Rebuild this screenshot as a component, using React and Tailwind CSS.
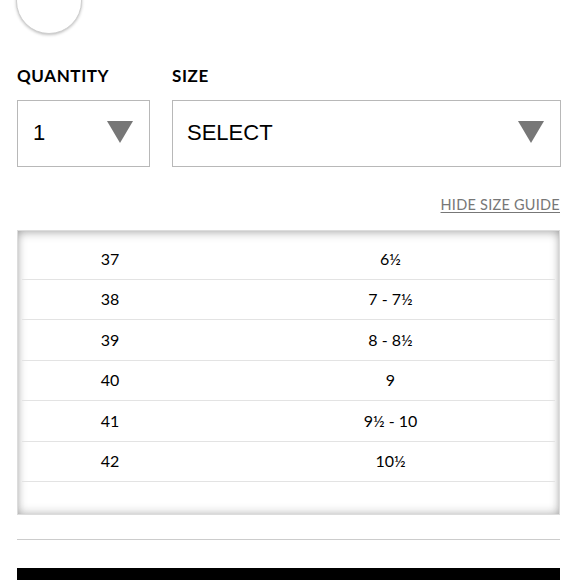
import React from 'react';

const sizes = [
  ['37', '6½'],
  ['38', '7 - 7½'],
  ['39', '8 - 8½'],
  ['40', '9'],
  ['41', '9½ - 10'],
  ['42', '10½'],
];

const Caret = () => (
  <svg width="26" height="22" viewBox="0 0 26 22">
    <polygon points="0,0 26,0 13,22" fill="#777777" />
  </svg>
);

export default function App() {
  return (
    <div className="relative w-[580px] h-[580px] overflow-hidden bg-white px-[17px]" style={{ fontFamily: 'Lato, "Noto Sans", sans-serif' }}>
      {/* swatch circle */}
      <div className="absolute left-[16px] top-[-32px] w-[66px] h-[66px] rounded-full bg-white border border-[#cfcfcf] shadow-[0_1px_3px_rgba(0,0,0,0.25)]" />

      <div className="pt-[66px] flex gap-[22px]">
        <div className="w-[133px]">
          <div className="text-[17px] font-bold text-black tracking-[0.6px] leading-[20px]">QUANTITY</div>
          <div className="mt-[14px] h-[67px] border-[1.5px] border-[#b8b8b8] flex items-center justify-between pl-[15px] pr-[16px] pb-[3px]">
            <span className="text-[22px] text-black" style={{ fontFamily: '"Liberation Sans", Arial, sans-serif' }}>1</span>
            <Caret />
          </div>
        </div>
        <div className="flex-1 pr-[2px]">
          <div className="text-[17px] font-bold text-black tracking-[0.6px] leading-[20px]">SIZE</div>
          <div className="mt-[14px] h-[67px] border-[1.5px] border-[#b8b8b8] flex items-center justify-between pl-[14px] pr-[16px] pb-[3px]">
            <span className="text-[22px] text-black" style={{ fontFamily: '"Liberation Sans", Arial, sans-serif' }}>SELECT</span>
            <Caret />
          </div>
        </div>
      </div>

      <div className="mt-[29px] flex justify-end pr-[3px]">
        <span className="text-[14.5px] text-[#777] underline underline-offset-[2px] tracking-[0.25px] leading-[18px]">HIDE SIZE GUIDE</span>
      </div>

      <div className="mt-[16px] mr-[3px] h-[285px] border border-[#dcdcdc] shadow-[inset_0_6px_8px_-3px_rgba(0,0,0,0.22),inset_6px_0_8px_-4px_rgba(0,0,0,0.15),inset_-6px_0_8px_-4px_rgba(0,0,0,0.15),inset_0_-6px_8px_-3px_rgba(0,0,0,0.15)] pt-[8px] px-[4px]">
        {sizes.map(([eu, us]) => (
          <div key={eu} className="flex h-[40.5px] items-center border-b border-[#e3e3e3] text-[16px] text-black">
            <div className="w-[176px] text-center">{eu}</div>
            <div className="flex-1 text-center pl-[28px]">{us}</div>
          </div>
        ))}
      </div>

      <div className="mt-[24px] mr-[3px] h-[1px] bg-[#cccccc]" />
      <div className="mt-[28px] mr-[3px] h-[20px] bg-black" />
    </div>
  );
}
